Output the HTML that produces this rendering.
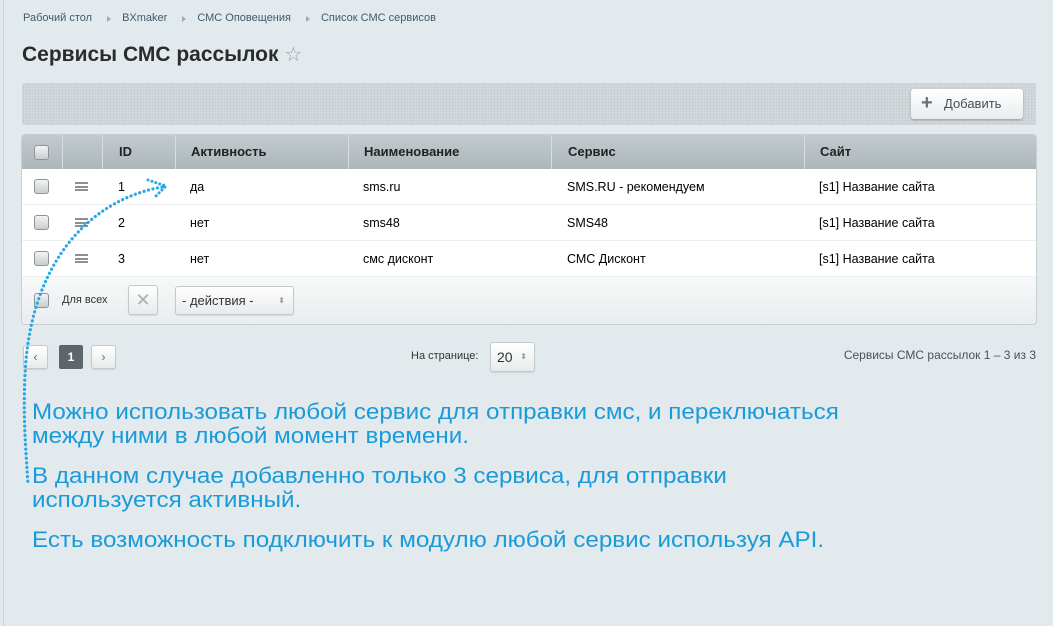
<!DOCTYPE html>
<html><head><meta charset="utf-8"><style>
*{margin:0;padding:0;box-sizing:border-box}
body{width:1053px;height:626px;overflow:hidden;background:#e3eaed;font-family:"Liberation Sans",sans-serif;position:relative;color:#000}
.abs{position:absolute}
.bc{top:12px;left:23px;font-size:11px;color:#3e5a6e}
.bc span{margin-right:30px;position:relative}
.bc span:not(:last-child)::after{content:"";position:absolute;right:-19px;top:4px;border-left:4px solid #a0acb3;border-top:3px solid transparent;border-bottom:3px solid transparent}
h1{position:absolute;top:42px;left:22px;font-size:21px;font-weight:bold;color:#2b2b2b}
.tb{top:83px;left:22px;width:1014px;height:42px;background:#d3d9dc;background-image:radial-gradient(#c5cbce 0.8px,transparent 0.8px);background-size:3px 3px;border-radius:3px}
.add{top:89px;left:911px;width:112px;height:30px;background:linear-gradient(#fff,#e8ecee);border-radius:3px;box-shadow:0 1px 2px rgba(0,0,0,.3);font-size:13px;color:#4a4f53;line-height:30px;padding-left:33px}
.add::before{content:"+";position:absolute;left:10px;top:-1px;font-size:20px;font-weight:bold;color:#6b6f73}
.tbl{top:135px;left:22px;width:1014px;height:189px;background:#fff;border-radius:3px;box-shadow:0 0 0 1px #c7cfd3;overflow:hidden}
.hd{position:absolute;top:0;left:0;width:100%;height:34px;background:linear-gradient(#c2cacd,#adb7bb);font-size:13px;font-weight:bold;color:#222}
.hd div,.r div{position:absolute;top:0;height:100%;line-height:34px}
.hd .s{border-left:1px solid #d8dee0}
.r{position:absolute;left:0;width:100%;height:36px;font-size:12.5px;border-bottom:1px solid #eceff0}
.r div{line-height:36px}
.cb{position:absolute;width:15px;height:15px;border:1px solid #8d9497;border-radius:3px;background:linear-gradient(#f3f4f4,#c9cdcf)}
.bars{position:absolute;width:13px;height:9px;border-top:2px solid #8a9094;border-bottom:2px solid #8a9094}
.bars::after{content:"";position:absolute;left:0;right:0;top:1.5px;border-top:2px solid #8a9094}
.ft{position:absolute;top:142px;left:0;width:100%;height:47px;background:linear-gradient(#f7f9f9,#e9edee);font-size:11px;color:#333}
.btn{position:absolute;border:1px solid #c3c9cc;border-radius:3px;background:linear-gradient(#fff,#e7ebec);box-shadow:0 1px 1px rgba(0,0,0,.1)}
.blue{position:absolute;left:32px;color:#1a9bd9;font-size:22px;line-height:24px;transform:scaleX(1.1);transform-origin:0 0;white-space:nowrap}
</style></head><body>
<div style="position:absolute;left:3px;top:0;width:1px;height:626px;background:#c9d2d6"></div>
<div class="abs bc"><span>Рабочий стол</span><span>BXmaker</span><span>СМС Оповещения</span><span>Список СМС сервисов</span></div>
<h1>Сервисы СМС рассылок <span style="color:#9aa1a5;font-weight:normal;font-size:20px">☆</span></h1>
<div class="abs tb"></div>
<div class="abs add">Добавить</div>
<div class="abs tbl">
 <div class="hd">
  <div class="cb" style="left:12px;top:10px;height:15px;line-height:0"></div>
  <div class="s" style="left:40px;width:1px"></div>
  <div class="s" style="left:80px;padding-left:16px">ID</div>
  <div class="s" style="left:153px;padding-left:15px">Активность</div>
  <div class="s" style="left:326px;padding-left:15px">Наименование</div>
  <div class="s" style="left:529px;padding-left:16px">Сервис</div>
  <div class="s" style="left:782px;padding-left:15px">Сайт</div>
 </div>
 <div class="r" style="top:34px"><span class="cb" style="left:12px;top:10px"></span><span class="bars" style="left:53px;top:13px"></span><div style="left:96px">1</div><div style="left:168px">да</div><div style="left:341px">sms.ru</div><div style="left:545px">SMS.RU - рекомендуем</div><div style="left:797px">[s1] Название сайта</div></div>
 <div class="r" style="top:70px"><span class="cb" style="left:12px;top:10px"></span><span class="bars" style="left:53px;top:13px"></span><div style="left:96px">2</div><div style="left:168px">нет</div><div style="left:341px">sms48</div><div style="left:545px">SMS48</div><div style="left:797px">[s1] Название сайта</div></div>
 <div class="r" style="top:106px"><span class="cb" style="left:12px;top:10px"></span><span class="bars" style="left:53px;top:13px"></span><div style="left:96px">3</div><div style="left:168px">нет</div><div style="left:341px">смс дисконт</div><div style="left:545px">СМС Дисконт</div><div style="left:797px">[s1] Название сайта</div></div>
 <div class="ft">
  <span class="cb" style="left:12px;top:16px"></span>
  <span style="position:absolute;left:40px;top:17px">Для всех</span>
  <span class="btn" style="left:106px;top:8px;width:30px;height:30px;color:#aab0b3;font-size:18px;text-align:center;line-height:28px">✕</span>
  <span class="btn" style="left:153px;top:9px;width:119px;height:29px;font-size:13px;line-height:27px;padding-left:6px;color:#333">- действия -<span style="position:absolute;right:8px;top:0;font-size:8px;color:#999">⬍</span></span>
 </div>
</div>
<span class="btn" style="left:23px;top:345px;width:25px;height:24px;text-align:center;line-height:22px;font-size:12px;color:#666">‹</span>
<span style="position:absolute;left:59px;top:345px;width:24px;height:24px;background:#5d666b;border-radius:2px;color:#fff;font-size:12px;font-weight:bold;text-align:center;line-height:24px">1</span>
<span class="btn" style="left:91px;top:345px;width:25px;height:24px;text-align:center;line-height:22px;font-size:12px;color:#666">›</span>
<span style="position:absolute;left:411px;top:350px;font-size:11px;color:#333">На странице:</span>
<span class="btn" style="left:490px;top:342px;width:45px;height:30px;font-size:14px;line-height:28px;padding-left:6px;color:#333">20<span style="position:absolute;right:7px;top:0;font-size:8px;color:#999">⬍</span></span>
<span style="position:absolute;right:17px;top:348px;font-size:12px;color:#4a5257">Сервисы СМС рассылок 1 – 3 из 3</span>
<svg style="position:absolute;left:0;top:0" width="1053" height="626">
<path d="M162 187 C 90 200, 35 260, 26 360 C 22 410, 26 450, 28 485" fill="none" stroke="#2aa7e4" stroke-width="3.2" stroke-dasharray="0.1 4.5" stroke-linecap="round"/>
<path d="M148 180 L166 186 L154 198" fill="none" stroke="#2aa7e4" stroke-width="3" stroke-dasharray="0.1 4" stroke-linecap="round"/>
</svg>
<div class="blue" style="top:400px">Можно использовать любой сервис для отправки смс, и переключаться<br>между ними в любой момент времени.</div>
<div class="blue" style="top:464px">В данном случае добавленно только 3 сервиса, для отправки<br>используется активный.</div>
<div class="blue" style="top:528px">Есть возможность подключить к модулю любой сервис используя API.</div>
</body></html>
